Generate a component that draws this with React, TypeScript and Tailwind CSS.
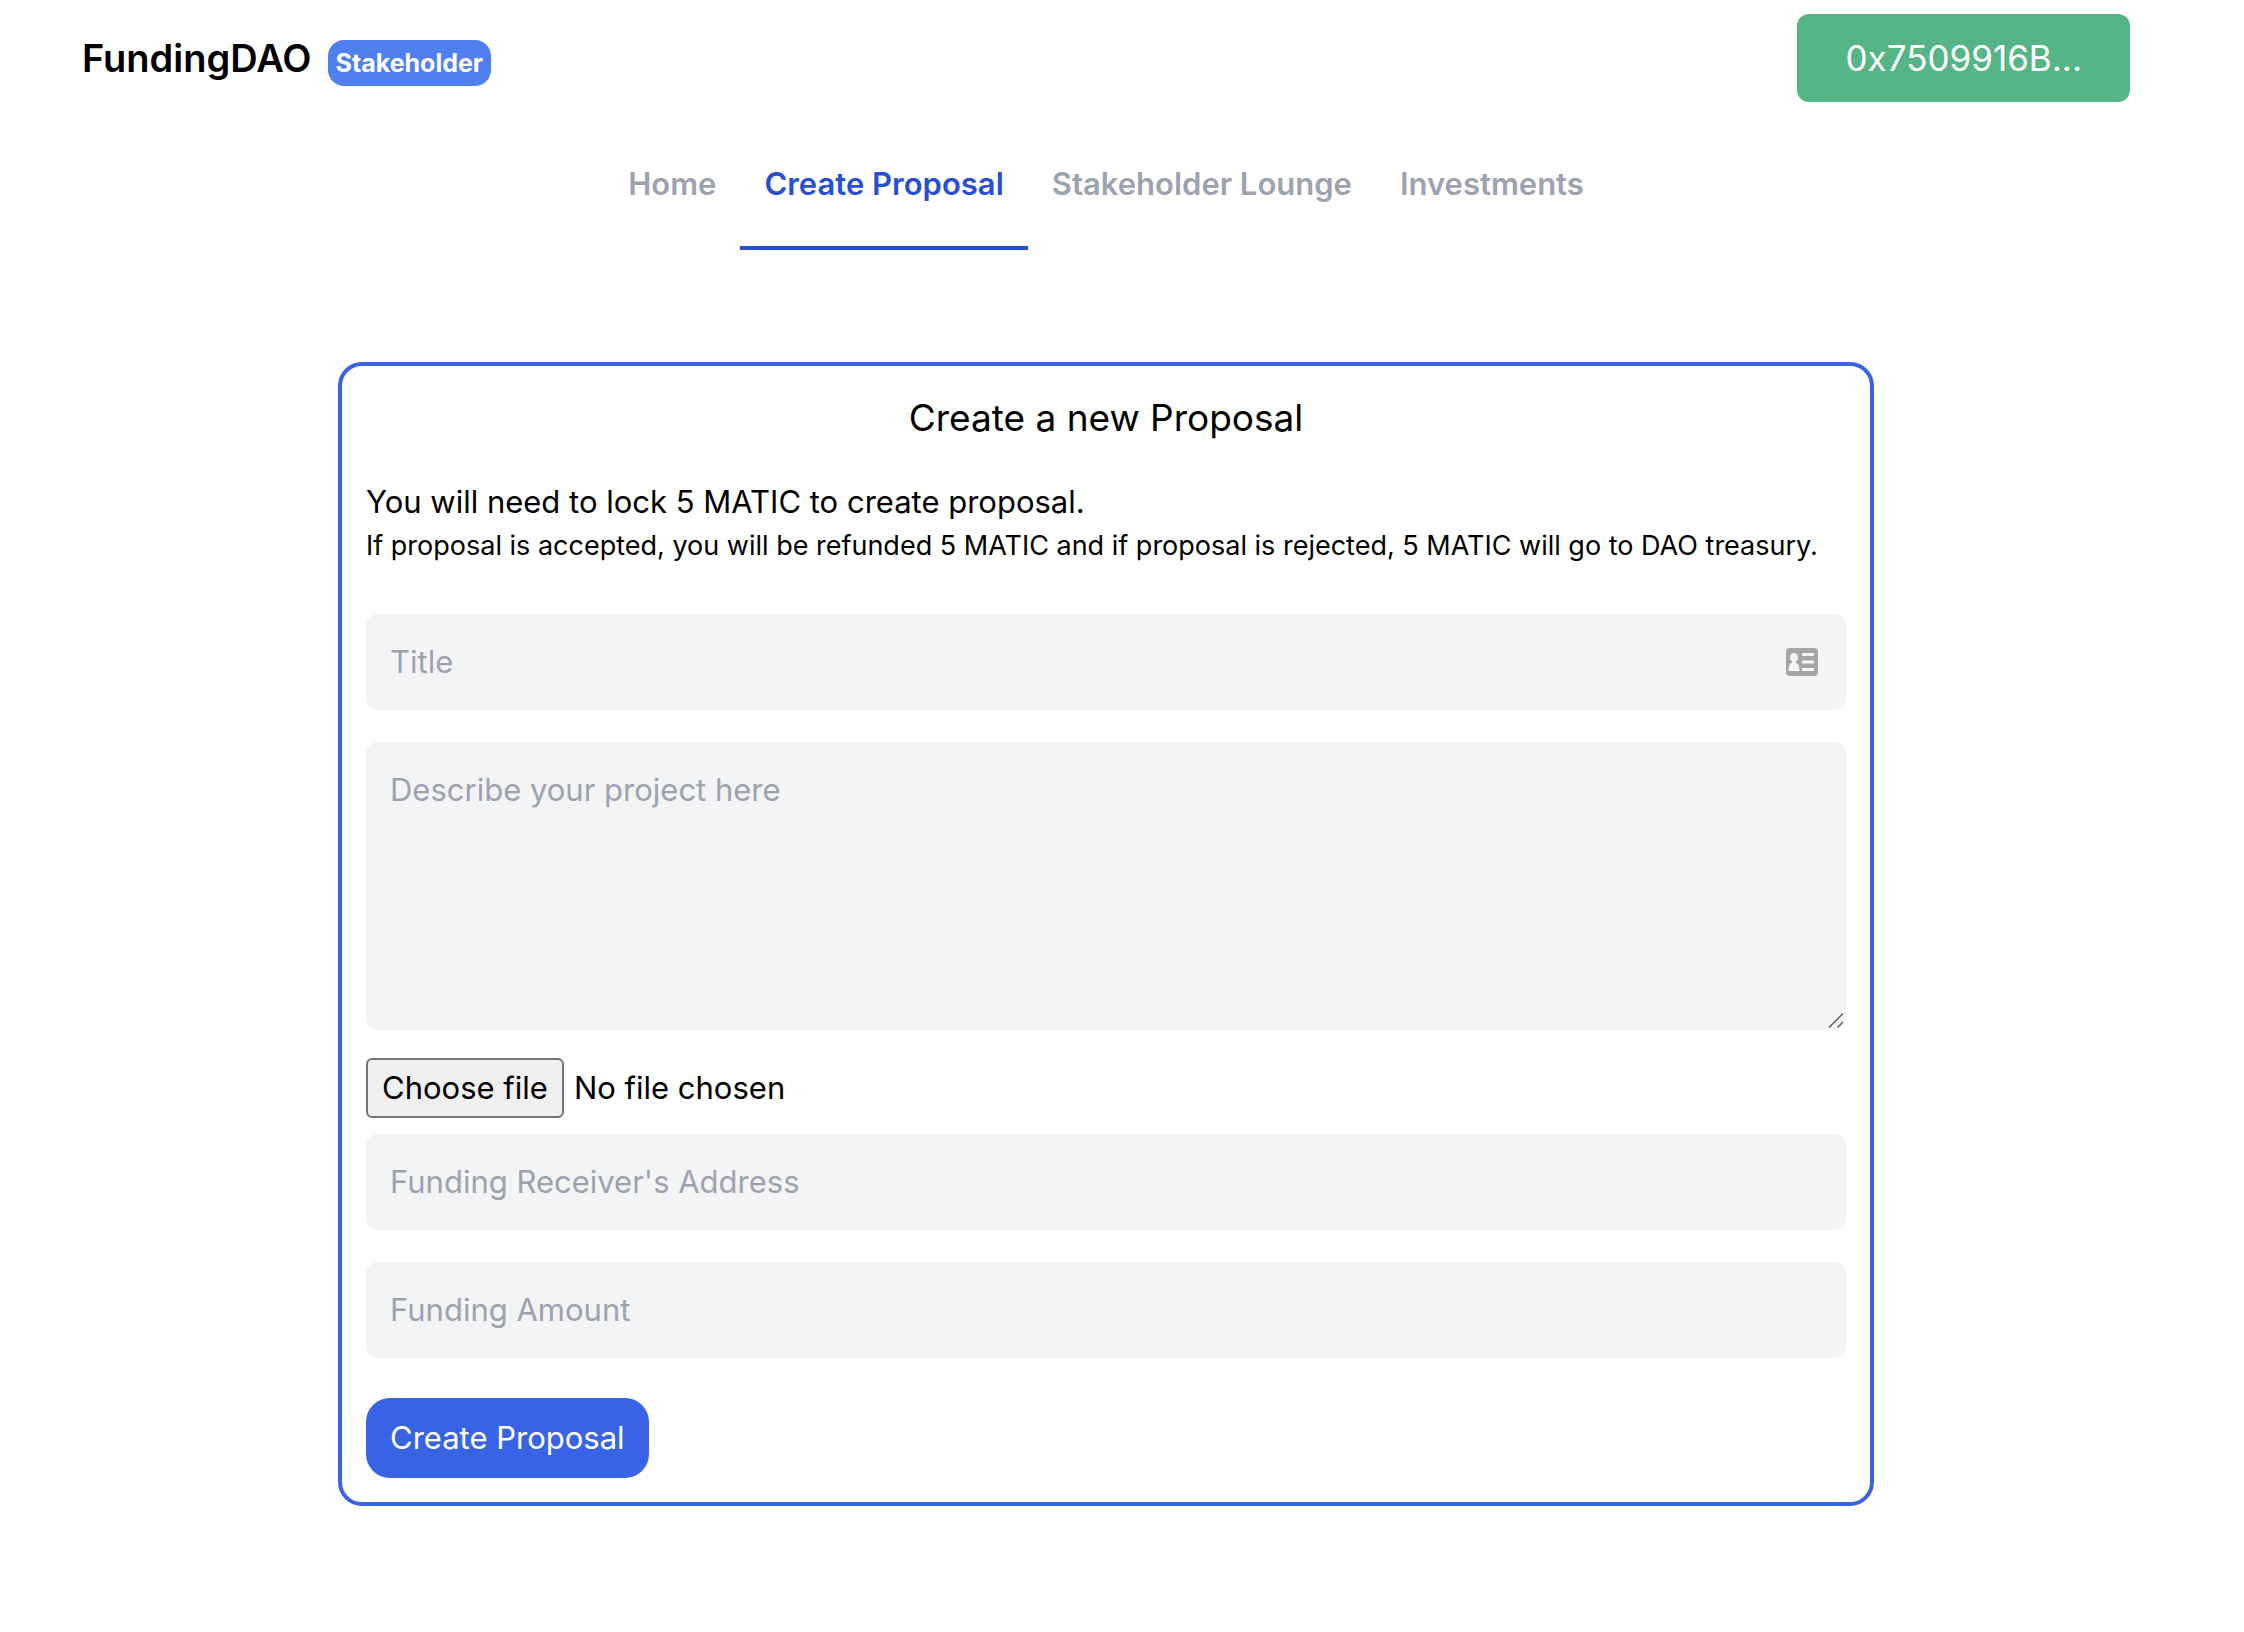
import { useState } from "react";

const tabs = ["Home", "Create Proposal", "Stakeholder Lounge", "Investments"];

const fieldClass =
  "block w-full rounded-xl bg-[#f3f4f6] p-6 text-[31px] leading-[48px] text-black placeholder:text-[#9ca3af] placeholder:opacity-100 outline-none";

function ContactCardIcon() {
  return (
    <svg viewBox="0 0 32 28" className="h-7 w-8" aria-hidden="true">
      <rect width="32" height="28" rx="4" fill="#a5a5a5" />
      <g fill="#f3f4f6">
        <rect x="16" y="5" width="12" height="3" />
        <rect x="16" y="12.500" width="12" height="3" />
        <rect x="16" y="20" width="12" height="3" />
        <ellipse cx="8" cy="9.500" rx="4" ry="4.500" />
        <path d="M6 12h4v2.500c2.400 1.200 3.500 4 3.500 8.500h-11c0-4.500 1.100-7.300 3.500-8.500z" />
      </g>
    </svg>
  );
}

function ResizeHandle() {
  return (
    <svg
      viewBox="0 0 16 16"
      className="pointer-events-none absolute right-0.5 bottom-0.5 size-4"
      stroke="#5f6063"
      strokeWidth="1.5"
      aria-hidden="true"
    >
      <path d="M1 15.500 15 1.500M9.500 15.500l5.500-5.500" />
    </svg>
  );
}

export default function App() {
  const [active, setActive] = useState("Create Proposal");
  const [fileName, setFileName] = useState("");

  return (
    <div className="min-h-screen bg-white pr-8 font-['Inter',sans-serif] text-black">
      <header className="flex items-center justify-between px-[82px] pt-3.5">
        <div className="flex items-baseline gap-4">
          <h1 className="text-[38px] leading-[56px] font-semibold">FundingDAO</h1>
          <span className="rounded-2xl bg-[#4f80ed] px-2 text-[25px] leading-[46px] font-bold text-white">
            Stakeholder
          </span>
        </div>
        <button type="button" className="rounded-xl bg-[#56b586] px-12 py-4 text-[35px] leading-[56px] text-white">
          0x7509916B...
        </button>
      </header>

      <nav className="mt-5 flex justify-center">
        {tabs.map((tab) => (
          <button
            key={tab}
            type="button"
            onClick={() => setActive(tab)}
            className={
              tab === active
                ? "border-b-4 border-[#294fd0] px-6 py-[38px] text-[31px] leading-[48px] font-semibold text-[#294fd0]"
                : "border-b-4 border-transparent px-6 py-[38px] text-[31px] leading-[48px] font-semibold text-[#9ca3af]"
            }
          >
            {tab}
          </button>
        ))}
      </nav>

      <main className="mx-auto mt-28 max-w-[1536px] rounded-3xl border-4 border-[#3863e4] p-6">
        <h2 className="text-center text-[37px] leading-[56px]">Create a new Proposal</h2>
        <p className="mt-8 text-[31px] leading-[48px]">You will need to lock 5 MATIC to create proposal.</p>
        <p className="text-[27px] leading-[40px]">
          If proposal is accepted, you will be refunded 5 MATIC and if proposal is rejected, 5 MATIC will go to DAO
          treasury.
        </p>

        <form className="mt-12" onSubmit={(e) => e.preventDefault()}>
          <div className="relative">
            <input type="text" aria-label="Title" placeholder="Title" className={fieldClass} />
            <span className="pointer-events-none absolute inset-y-0 right-7 flex items-center">
              <ContactCardIcon />
            </span>
          </div>
          <div className="relative mt-8">
            <textarea
              rows={5}
              aria-label="Describe your project here"
              placeholder="Describe your project here"
              className={`${fieldClass} resize-none`}
            />
            <ResizeHandle />
          </div>
          <div className="mt-7 flex items-center gap-2.5 text-[31px]">
            <input
              id="project-file"
              type="file"
              className="sr-only"
              onChange={(e) => setFileName(e.target.files?.[0]?.name ?? "")}
            />
            <label
              htmlFor="project-file"
              className="cursor-pointer rounded-md border-2 border-[#767676] bg-[#efefef] px-3.5 leading-[56px]"
            >
              Choose file
            </label>
            <span>{fileName || "No file chosen"}</span>
          </div>
          <input
            type="text"
            aria-label="Funding Receiver's Address"
            placeholder="Funding Receiver's Address"
            className={`${fieldClass} mt-4`}
          />
          <input
            type="text"
            aria-label="Funding Amount"
            placeholder="Funding Amount"
            className={`${fieldClass} mt-8`}
          />
          <button
            type="submit"
            className="mt-10 block rounded-3xl bg-[#3863e4] px-6 py-4 text-[31px] leading-[48px] text-white"
          >
            Create Proposal
          </button>
        </form>
      </main>
    </div>
  );
}
